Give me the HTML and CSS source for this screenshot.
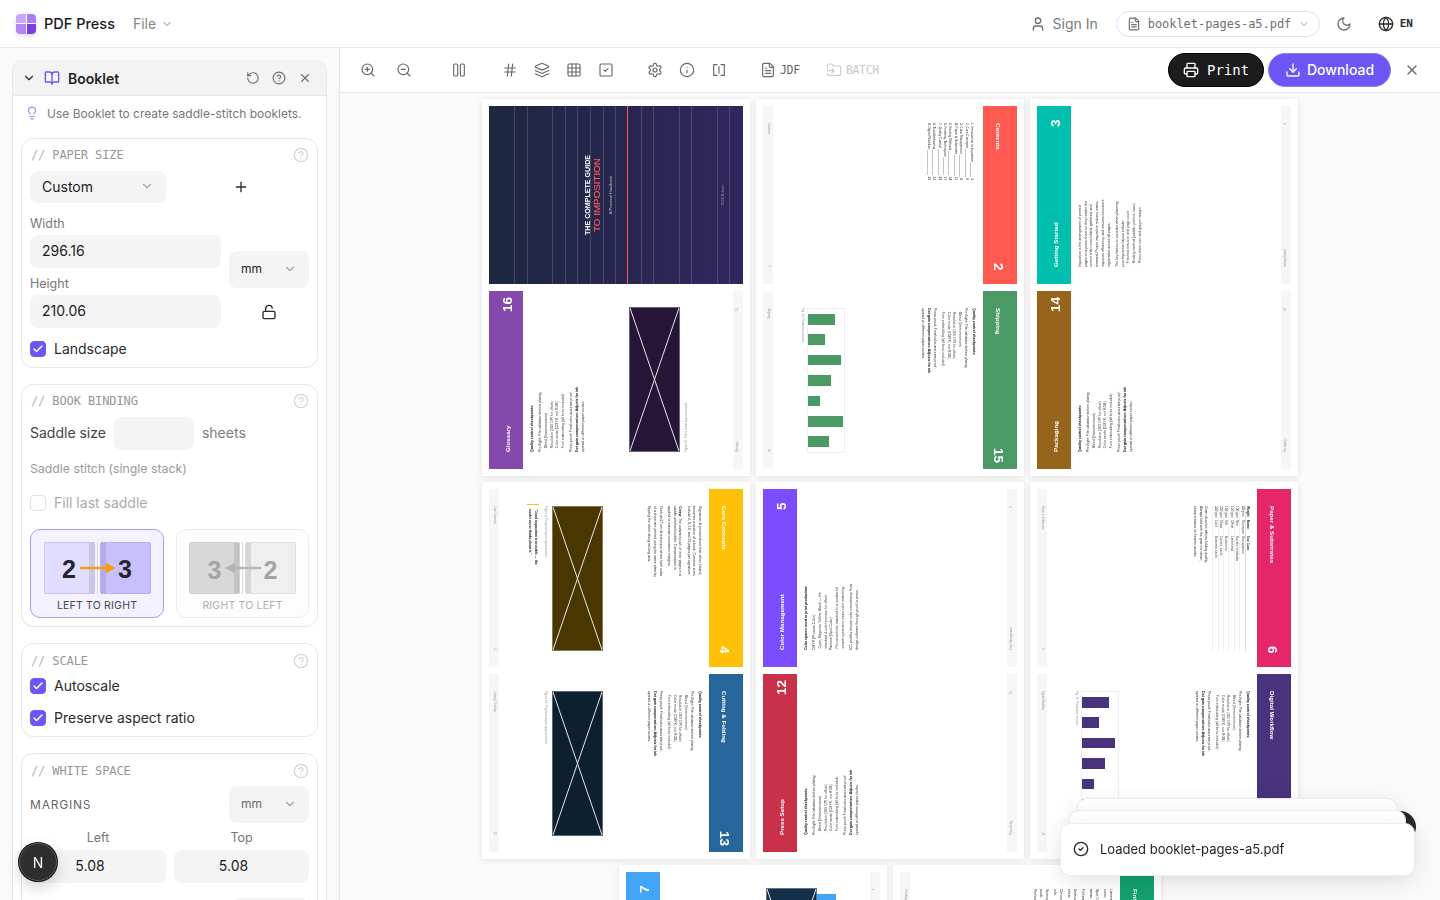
FILE: index.html
```html
<!DOCTYPE html>
<html lang="en">
<head>
    <meta charset="UTF-8">
    <meta name="viewport" content="width=device-width, initial-scale=1.0">
    <title>PDF Press</title>
    <link rel="stylesheet" href="styles.css">
</head>
<body>
    <svg class="sprite" xmlns="http://www.w3.org/2000/svg">
        <symbol id="i-chevron" viewBox="0 0 24 24"><path d="m6 9 6 6 6-6"/></symbol>
        <symbol id="i-user" viewBox="0 0 24 24"><path d="M19 21v-2a4 4 0 0 0-4-4H9a4 4 0 0 0-4 4v2"/><circle cx="12" cy="7" r="4"/></symbol>
        <symbol id="i-file" viewBox="0 0 24 24"><path d="M15 2H6a2 2 0 0 0-2 2v16a2 2 0 0 0 2 2h12a2 2 0 0 0 2-2V7Z"/><path d="M14 2v4a2 2 0 0 0 2 2h4"/><path d="M10 9H8"/><path d="M16 13H8"/><path d="M16 17H8"/></symbol>
        <symbol id="i-moon" viewBox="0 0 24 24"><path d="M12 3a6 6 0 0 0 9 9 9 9 0 1 1-9-9Z"/></symbol>
        <symbol id="i-globe" viewBox="0 0 24 24"><circle cx="12" cy="12" r="10"/><path d="M12 2a14.5 14.5 0 0 0 0 20 14.5 14.5 0 0 0 0-20"/><path d="M2 12h20"/></symbol>
        <symbol id="i-book" viewBox="0 0 24 24"><path d="M12 7v14"/><path d="M3 18a1 1 0 0 1-1-1V4a1 1 0 0 1 1-1h5a4 4 0 0 1 4 4 4 4 0 0 1 4-4h5a1 1 0 0 1 1 1v13a1 1 0 0 1-1 1h-6a3 3 0 0 0-3 3 3 3 0 0 0-3-3z"/></symbol>
        <symbol id="i-reset" viewBox="0 0 24 24"><path d="M3 12a9 9 0 1 0 9-9 9.75 9.75 0 0 0-6.74 2.74L3 8"/><path d="M3 3v5h5"/></symbol>
        <symbol id="i-help" viewBox="0 0 24 24"><circle cx="12" cy="12" r="10"/><path d="M9.09 9a3 3 0 0 1 5.83 1c0 2-3 3-3 3"/><path d="M12 17h.01"/></symbol>
        <symbol id="i-x" viewBox="0 0 24 24"><path d="M18 6 6 18"/><path d="m6 6 12 12"/></symbol>
        <symbol id="i-bulb" viewBox="0 0 24 24"><path d="M15 14c.2-1 .7-1.7 1.5-2.5 1-.9 1.5-2.2 1.5-3.5A6 6 0 0 0 6 8c0 1 .2 2.2 1.5 3.5.7.7 1.3 1.5 1.5 2.5"/><path d="M9 18h6"/><path d="M10 22h4"/></symbol>
        <symbol id="i-plus" viewBox="0 0 24 24"><path d="M5 12h14"/><path d="M12 5v14"/></symbol>
        <symbol id="i-lock" viewBox="0 0 24 24"><rect width="18" height="11" x="3" y="11" rx="2"/><path d="M7 11V7a5 5 0 0 1 9.9-1"/></symbol>
        <symbol id="i-check" viewBox="0 0 24 24"><path d="M20 6 9 17l-5-5"/></symbol>
        <symbol id="i-zoom-in" viewBox="0 0 24 24"><circle cx="11" cy="11" r="8"/><path d="m21 21-4.35-4.35"/><path d="M11 8v6"/><path d="M8 11h6"/></symbol>
        <symbol id="i-zoom-out" viewBox="0 0 24 24"><circle cx="11" cy="11" r="8"/><path d="m21 21-4.35-4.35"/><path d="M8 11h6"/></symbol>
        <symbol id="i-columns" viewBox="0 0 24 24"><rect width="6" height="18" x="4" y="3" rx="2"/><rect width="6" height="18" x="14" y="3" rx="2"/></symbol>
        <symbol id="i-hash" viewBox="0 0 24 24"><path d="M4 9h16"/><path d="M4 15h16"/><path d="M10 3 8 21"/><path d="M16 3l-2 18"/></symbol>
        <symbol id="i-layers" viewBox="0 0 24 24"><path d="m12.83 2.18a2 2 0 0 0-1.66 0L2.6 6.08a1 1 0 0 0 0 1.83l8.58 3.91a2 2 0 0 0 1.66 0l8.58-3.9a1 1 0 0 0 0-1.83Z"/><path d="m22 17.65-9.17 4.16a2 2 0 0 1-1.66 0L2 17.65"/><path d="m22 12.65-9.17 4.16a2 2 0 0 1-1.66 0L2 12.65"/></symbol>
        <symbol id="i-grid" viewBox="0 0 24 24"><rect width="18" height="18" x="3" y="3" rx="2"/><path d="M3 9h18"/><path d="M3 15h18"/><path d="M9 3v18"/><path d="M15 3v18"/></symbol>
        <symbol id="i-square-check" viewBox="0 0 24 24"><rect width="18" height="18" x="3" y="3" rx="2"/><path d="m9 12 2 2 4-4"/></symbol>
        <symbol id="i-gear" viewBox="0 0 24 24"><path d="M12.22 2h-.44a2 2 0 0 0-2 2v.18a2 2 0 0 1-1 1.73l-.43.25a2 2 0 0 1-2 0l-.15-.08a2 2 0 0 0-2.73.73l-.22.38a2 2 0 0 0 .73 2.73l.15.1a2 2 0 0 1 1 1.72v.51a2 2 0 0 1-1 1.74l-.15.09a2 2 0 0 0-.73 2.73l.22.38a2 2 0 0 0 2.73.73l.15-.08a2 2 0 0 1 2 0l.43.25a2 2 0 0 1 1 1.73V20a2 2 0 0 0 2 2h.44a2 2 0 0 0 2-2v-.18a2 2 0 0 1 1-1.73l.43-.25a2 2 0 0 1 2 0l.15.08a2 2 0 0 0 2.73-.73l.22-.39a2 2 0 0 0-.73-2.73l-.15-.08a2 2 0 0 1-1-1.74v-.5a2 2 0 0 1 1-1.74l.15-.09a2 2 0 0 0 .73-2.73l-.22-.38a2 2 0 0 0-2.73-.73l-.15.08a2 2 0 0 1-2 0l-.43-.25a2 2 0 0 1-1-1.73V4a2 2 0 0 0-2-2z"/><circle cx="12" cy="12" r="3"/></symbol>
        <symbol id="i-info" viewBox="0 0 24 24"><circle cx="12" cy="12" r="10"/><path d="M12 16v-4"/><path d="M12 8h.01"/></symbol>
        <symbol id="i-split" viewBox="0 0 24 24"><path d="M9 4H4v16h5"/><path d="M15 4h5v16h-5"/><path d="M12 7v10"/></symbol>
        <symbol id="i-batch" viewBox="0 0 24 24"><path d="M2 9V5a2 2 0 0 1 2-2h3.9a2 2 0 0 1 1.69.9l.81 1.2a2 2 0 0 0 1.67.9H20a2 2 0 0 1 2 2v10a2 2 0 0 1-2 2H4a2 2 0 0 1-2-2v-1"/><path d="M2 13h10"/><path d="m9 16 3-3-3-3"/></symbol>
        <symbol id="i-printer" viewBox="0 0 24 24"><path d="M6 18H4a2 2 0 0 1-2-2v-5a2 2 0 0 1 2-2h16a2 2 0 0 1 2 2v5a2 2 0 0 1-2 2h-2"/><path d="M6 9V3a1 1 0 0 1 1-1h10a1 1 0 0 1 1 1v6"/><rect x="6" y="14" width="12" height="8" rx="1"/></symbol>
        <symbol id="i-download" viewBox="0 0 24 24"><path d="M12 3v12"/><path d="m7 10 5 5 5-5"/><path d="M21 15v4a2 2 0 0 1-2 2H5a2 2 0 0 1-2-2v-4"/></symbol>
        <symbol id="i-circle-check" viewBox="0 0 24 24"><circle cx="12" cy="12" r="10"/><path d="m9 12 2 2 4-4"/></symbol>
        <symbol id="i-cross" viewBox="0 0 145 51" preserveAspectRatio="none"><path d="M0 0 145 51"/><path d="M0 51 145 0"/></symbol>
    </svg>

    <header class="topbar">
        <div class="logo"><i></i><i></i><i></i><i></i></div>
        <span class="brand">PDF Press</span>
        <span class="file-menu">File <svg class="ico ico-12"><use href="#i-chevron"/></svg></span>
        <div class="topbar-right">
            <svg class="ico ico-16 c-grey"><use href="#i-user"/></svg>
            <span class="sign-in">Sign In</span>
            <div class="file-pill">
                <svg class="ico ico-14"><use href="#i-file"/></svg>
                <span>booklet-pages-a5.pdf</span>
                <svg class="ico ico-12 c-light"><use href="#i-chevron"/></svg>
            </div>
            <svg class="ico ico-16 c-grey moon"><use href="#i-moon"/></svg>
            <svg class="ico ico-16 c-dark globe"><use href="#i-globe"/></svg>
            <span class="lang">EN</span>
        </div>
    </header>

    <div class="workspace">
        <aside class="sidebar">
            <section class="panel">
                <div class="panel-head">
                    <svg class="ico ico-14 c-dark"><use href="#i-chevron"/></svg>
                    <svg class="ico ico-16 c-purple"><use href="#i-book"/></svg>
                    <span class="panel-title">Booklet</span>
                    <svg class="ico ico-14 c-grey head-reset"><use href="#i-reset"/></svg>
                    <svg class="ico ico-14 c-grey"><use href="#i-help"/></svg>
                    <svg class="ico ico-14 c-grey"><use href="#i-x"/></svg>
                </div>
                <div class="panel-body">
                    <p class="tip"><svg class="ico ico-14 c-violet"><use href="#i-bulb"/></svg>Use Booklet to create saddle-stitch booklets.</p>

                    <div class="card">
                        <div class="card-title"><span><b>//</b> PAPER SIZE</span><svg class="ico ico-16 c-faint"><use href="#i-help"/></svg></div>
                        <div class="size-top">
                            <div class="select select-custom">Custom<svg class="ico ico-14 c-light"><use href="#i-chevron"/></svg></div>
                            <svg class="ico ico-16 c-dark plus"><use href="#i-plus"/></svg>
                        </div>
                        <div class="size-grid">
                            <div class="size-fields">
                                <label class="field-label">Width</label>
                                <div class="input">296.16</div>
                                <label class="field-label second">Height</label>
                                <div class="input">210.06</div>
                            </div>
                            <div class="size-side">
                                <div class="select select-unit">mm<svg class="ico ico-14 c-light"><use href="#i-chevron"/></svg></div>
                                <div class="lock"><svg class="ico ico-16 c-dark"><use href="#i-lock"/></svg></div>
                            </div>
                        </div>
                        <div class="check-row landscape"><span class="box on"><svg class="ico"><use href="#i-check"/></svg></span>Landscape</div>
                    </div>

                    <div class="card card-binding">
                        <div class="card-title"><span><b>//</b> BOOK BINDING</span><svg class="ico ico-16 c-faint"><use href="#i-help"/></svg></div>
                        <div class="saddle-row">
                            <span>Saddle size</span>
                            <div class="input input-saddle"></div>
                            <span class="muted">sheets</span>
                        </div>
                        <p class="helper">Saddle stitch (single stack)</p>
                        <div class="check-row disabled"><span class="box"></span>Fill last saddle</div>
                        <div class="dir-row">
                            <div class="dir-card active">
                                <div class="dir-pages">
                                    <div class="dir-page strip-right">2</div>
                                    <div class="dir-spine"></div>
                                    <div class="dir-page strip-left dark">3</div>
                                    <svg class="dir-arrow" viewBox="0 0 36 12"><path d="M0 6h26" stroke="#f59e0b" stroke-width="2.4"/><path d="M26 0.5 35.5 6 26 11.5z" fill="#f59e0b"/></svg>
                                </div>
                                <span>LEFT TO RIGHT</span>
                            </div>
                            <div class="dir-card">
                                <div class="dir-pages">
                                    <div class="dir-page strip-right dark">3</div>
                                    <div class="dir-spine"></div>
                                    <div class="dir-page strip-left">2</div>
                                    <svg class="dir-arrow" viewBox="0 0 36 12"><path d="M10 6h26" stroke="#b4b4b4" stroke-width="2.4"/><path d="M10 0.5 0.5 6 10 11.5z" fill="#b4b4b4"/></svg>
                                </div>
                                <span>RIGHT TO LEFT</span>
                            </div>
                        </div>
                    </div>

                    <div class="card">
                        <div class="card-title"><span><b>//</b> SCALE</span><svg class="ico ico-16 c-faint"><use href="#i-help"/></svg></div>
                        <div class="check-row autoscale"><span class="box on"><svg class="ico"><use href="#i-check"/></svg></span>Autoscale</div>
                        <div class="check-row preserve"><span class="box on"><svg class="ico"><use href="#i-check"/></svg></span>Preserve aspect ratio</div>
                    </div>

                    <div class="card">
                        <div class="card-title"><span><b>//</b> WHITE SPACE</span><svg class="ico ico-16 c-faint"><use href="#i-help"/></svg></div>
                        <div class="margins-row">
                            <span>MARGINS</span>
                            <div class="select select-unit">mm<svg class="ico ico-14 c-light"><use href="#i-chevron"/></svg></div>
                        </div>
                        <div class="margin-grid">
                            <div><label>Left</label><div class="input num-input">5.08</div></div>
                            <div><label>Top</label><div class="input num-input">5.08</div></div>
                        </div>
                        <div class="margin-next"></div>
                    </div>
                </div>
            </section>
        </aside>

        <main class="main">
            <div class="toolbar">
                <div class="tool-group tg-zoom">
                    <button class="tool"><svg class="ico ico-16"><use href="#i-zoom-in"/></svg></button>
                    <button class="tool"><svg class="ico ico-16"><use href="#i-zoom-out"/></svg></button>
                </div>
                <div class="tool-group tg-view">
                    <button class="tool"><svg class="ico ico-16"><use href="#i-columns"/></svg></button>
                </div>
                <div class="tool-group tg-marks">
                    <button class="tool"><svg class="ico ico-16"><use href="#i-hash"/></svg></button>
                    <button class="tool"><svg class="ico ico-16"><use href="#i-layers"/></svg></button>
                    <button class="tool"><svg class="ico ico-16"><use href="#i-grid"/></svg></button>
                    <button class="tool"><svg class="ico ico-16"><use href="#i-square-check"/></svg></button>
                </div>
                <div class="tool-group tg-info">
                    <button class="tool"><svg class="ico ico-16"><use href="#i-gear"/></svg></button>
                    <button class="tool"><svg class="ico ico-16"><use href="#i-info"/></svg></button>
                    <button class="tool"><svg class="ico ico-16"><use href="#i-split"/></svg></button>
                </div>
                <div class="tool-text tg-jdf"><svg class="ico ico-16"><use href="#i-file"/></svg>JDF</div>
                <div class="tool-text tg-batch"><svg class="ico ico-16"><use href="#i-batch"/></svg>BATCH</div>
                <div class="toolbar-actions">
                    <button class="btn-print"><svg class="ico ico-16"><use href="#i-printer"/></svg>Print</button>
                    <button class="btn-download"><svg class="ico ico-16"><use href="#i-download"/></svg>Download</button>
                    <svg class="ico ico-16 c-grey close-doc"><use href="#i-x"/></svg>
                </div>
            </div>

            <div class="canvas">
                <div class="sheet-row">
                    <div class="sheet">
                        <div class="page cover">
                            <svg class="cover-lines" viewBox="0 0 254 178" shape-rendering="crispEdges">
                                <path d="M25.5 0v178M38.5 0v178M63.5 0v178M76.5 0v178M88.5 0v178M101.5 0v178M114.5 0v178M126.5 0v178M152.5 0v178M164.5 0v178M190.5 0v178M202.5 0v178M228.5 0v178M240.5 0v178" stroke="#fff" stroke-opacity=".16"/>
                                <path d="M138.5 0v178" stroke="#ff5a52"/>
                            </svg>
                            <div class="page-in up cover-in">
                                <h2>THE COMPLETE GUIDE<em>TO IMPOSITION</em></h2>
                                <p class="cover-sub">A Practical Handbook</p>
                                <p class="cover-ed">2026 Edition</p>
                            </div>
                        </div>
                        <div class="page">
                            <div class="page-in up">
                                <div class="band bg-glossary"><span>Glossary</span><b>16</b></div>
                                <div class="copy">
                                    <p><strong>Quality control checkpoints:</strong></p>
                                    <p class="gap">Pre-flight: File validation before plating</p>
                                    <p class="li">· Bleed (3mm minimum)</p>
                                    <p class="li">· Resolution (300 DPI for offset)</p>
                                    <p class="li">· Color mode (CMYK, not RGB)</p>
                                    <p class="li">· Font embedding (all fonts included)</p>
                                    <p class="gap">Press proof: Final color-accurate proof.</p>
                                    <p><strong>Dot gain compensation: Adjusts for ink</strong> spread on different paper stocks.</p>
                                </div>
                                <div class="fig fig-plum"><svg><use href="#i-cross"/></svg></div>
                                <p class="caption">Figure 16: Press sheet layout example</p>
                                <div class="foot"><span>Glossary</span><span>16</span></div>
                            </div>
                        </div>
                    </div>

                    <div class="sheet">
                        <div class="page">
                            <div class="page-in down">
                                <div class="band bg-contents"><span>Contents</span><b>2</b></div>
                                <div class="toc">
                                    <p><span>1. Introduction to Imposition</span><i></i>3</p>
                                    <p><span>2. Core Concepts</span><i></i>6</p>
                                    <p><span>3. Color Management</span><i></i>8</p>
                                    <p><span>4. Paper &amp; Substrates</span><i></i>11</p>
                                    <p><span>5. Binding Methods</span><i></i>14</p>
                                    <p><span>6. Finishing Techniques</span><i></i>17</p>
                                    <p><span>7. Quality Control</span><i></i>20</p>
                                    <p><span>8. Troubleshooting</span><i></i>23</p>
                                    <p><span>9. Digital Workflow</span><i></i>26</p>
                                </div>
                                <div class="foot"><span>Contents</span><span>2</span></div>
                            </div>
                        </div>
                        <div class="page">
                            <div class="page-in down">
                                <div class="band bg-shipping"><span>Shipping</span><b>15</b></div>
                                <div class="copy copy-chart">
                                    <p><strong>Quality control checkpoints:</strong></p>
                                    <p class="gap">Pre-flight: File validation before plating</p>
                                    <p class="li">· Bleed (3mm minimum)</p>
                                    <p class="li">· Resolution (300 DPI for offset)</p>
                                    <p class="li">· Color mode (CMYK, not RGB)</p>
                                    <p class="li">· Font embedding (all fonts included)</p>
                                    <p class="gap">Press proof: Final color-accurate proof.</p>
                                    <p><strong>Dot gain compensation: Adjusts for ink</strong> spread on different paper stocks.</p>
                                </div>
                                <div class="chart chart-green">
                                    <i style="height:27px"></i><i style="height:17px"></i><i style="height:33px"></i><i style="height:23px"></i><i style="height:12px"></i><i style="height:35px"></i><i style="height:21px"></i>
                                </div>
                                <p class="caption caption-chart">Fig. 15: Production metrics</p>
                                <div class="foot"><span>Shipping</span><span>15</span></div>
                            </div>
                        </div>
                    </div>

                    <div class="sheet">
                        <div class="page">
                            <div class="page-in up">
                                <div class="band bg-started"><span>Getting Started</span><b>3</b></div>
                                <div class="copy">
                                    <p>Imposition is the arrangement of printed pages on a press sheet so they read in the correct order once folded, gathered, and trimmed. Proper imposition reduces waste, improves efficiency, and ensures consistent registration across all pages.</p>
                                    <p class="gap">The key factors to consider when planning your imposition layout include:</p>
                                    <p class="li">· Finished trim size and page count</p>
                                    <p class="li">· Binding method (saddle, perfect, case)</p>
                                    <p class="li">· Press sheet size and gripper margin</p>
                                </div>
                                <div class="foot"><span>Getting Started</span><span>3</span></div>
                            </div>
                        </div>
                        <div class="page">
                            <div class="page-in up">
                                <div class="band bg-packaging"><span>Packaging</span><b>14</b></div>
                                <div class="copy">
                                    <p><strong>Quality control checkpoints:</strong></p>
                                    <p class="gap">Pre-flight: File validation before plating</p>
                                    <p class="li">· Bleed (3mm minimum)</p>
                                    <p class="li">· Resolution (300 DPI for offset)</p>
                                    <p class="li">· Color mode (CMYK, not RGB)</p>
                                    <p class="li">· Font embedding (all fonts included)</p>
                                    <p class="gap">Press proof: Final color-accurate proof.</p>
                                    <p><strong>Dot gain compensation: Adjusts for ink</strong> spread on different paper stocks.</p>
                                </div>
                                <div class="foot"><span>Packaging</span><span>14</span></div>
                            </div>
                        </div>
                    </div>
                </div>

                <div class="sheet-row">
                    <div class="sheet">
                        <div class="page">
                            <div class="page-in down">
                                <div class="band bg-core"><span>Core Concepts</span><b>4</b></div>
                                <div class="copy">
                                    <p>Signature: A printed sheet that, when folded, becomes a section of a book. Common sizes include 4, 8, 16, and 32 pages per signature.</p>
                                    <p class="gap"><strong>Creep:</strong> The outward push of inner pages in a saddle-stitched booklet. Compensation is applied to maintain consistent margins.</p>
                                    <p class="gap">Work and Turn: A technique where both sides of a sheet are printed using the same plate by flipping the sheet along its long axis.</p>
                                </div>
                                <div class="fig fig-olive"><svg><use href="#i-cross"/></svg></div>
                                <p class="caption">Figure 4: Prepress layout approximation</p>
                                <blockquote class="pull">"Good imposition is invisible — the reader never thinks about it."</blockquote>
                                <div class="foot"><span>Core Concepts</span><span>4</span></div>
                            </div>
                        </div>
                        <div class="page">
                            <div class="page-in down">
                                <div class="band bg-cutting"><span>Cutting &amp; Folding</span><b>13</b></div>
                                <div class="copy">
                                    <p><strong>Quality control checkpoints:</strong></p>
                                    <p class="gap">Pre-flight: File validation before plating</p>
                                    <p class="li">· Bleed (3mm minimum)</p>
                                    <p class="li">· Resolution (300 DPI for offset)</p>
                                    <p class="li">· Color mode (CMYK, not RGB)</p>
                                    <p class="li">· Font embedding (all fonts included)</p>
                                    <p class="gap">Press proof: Final color-accurate proof.</p>
                                    <p><strong>Dot gain compensation: Adjusts for ink</strong> spread on different paper stocks.</p>
                                </div>
                                <div class="fig fig-navy"><svg><use href="#i-cross"/></svg></div>
                                <p class="caption">Figure 13: Prepress layout approximation</p>
                                <div class="foot"><span>Cutting &amp; Folding</span><span>13</span></div>
                            </div>
                        </div>
                    </div>

                    <div class="sheet">
                        <div class="page">
                            <div class="page-in up">
                                <div class="band bg-color"><span>Color Management</span><b>5</b></div>
                                <div class="copy">
                                    <p><strong>Color spaces used in print production:</strong></p>
                                    <p class="gap">CMYK (Process Color)</p>
                                    <p class="li">Cyan, Magenta, Yellow, Black — the standard 4-color process for offset.</p>
                                    <p>Pantone (Spot Color)</p>
                                    <p class="li">Pre-mixed inks matched to a numbered swatch system for exact color matching.</p>
                                    <p class="gap">ICC profiles ensure color consistency from design software through proof to press.</p>
                                </div>
                                <div class="foot"><span>Color Management</span><span>5</span></div>
                            </div>
                        </div>
                        <div class="page">
                            <div class="page-in up">
                                <div class="band bg-press"><span>Press Setup</span><b>12</b></div>
                                <div class="copy">
                                    <p><strong>Quality control checkpoints:</strong></p>
                                    <p class="gap">Pre-flight: File validation before plating</p>
                                    <p class="li">· Bleed (3mm minimum)</p>
                                    <p class="li">· Resolution (300 DPI for offset)</p>
                                    <p class="li">· Color mode (CMYK, not RGB)</p>
                                    <p class="li">· Font embedding (all fonts included)</p>
                                    <p class="gap">Press proof: Final color-accurate proof.</p>
                                    <p><strong>Dot gain compensation: Adjusts for ink</strong> spread on different paper stocks.</p>
                                </div>
                                <div class="foot"><span>Press Setup</span><span>12</span></div>
                            </div>
                        </div>
                    </div>

                    <div class="sheet">
                        <div class="page">
                            <div class="page-in down">
                                <div class="band bg-paper"><span>Paper &amp; Substrates</span><b>6</b></div>
                                <div class="paper-table">
                                    <p class="head"><span>Weight</span><span>Name</span><span>Use Case</span></p>
                                    <p><span>80 gsm</span><span>Newsprint</span><span>Newspapers</span></p>
                                    <p><span>100 gsm</span><span>Text</span><span>Novels, textbooks</span></p>
                                    <p><span>120 gsm</span><span>Offset</span><span>Letterhead</span></p>
                                    <p><span>150 gsm</span><span>Silk</span><span>Brochures</span></p>
                                    <p><span>250 gsm</span><span>Gloss</span><span>Covers, cards</span></p>
                                    <p><span>350 gsm</span><span>Card</span><span>Business cards</span></p>
                                </div>
                                <div class="copy paper-note">
                                    <p>Grain direction affects folding quality. Always fold with the grain for clean, sharp creases on heavier stocks.</p>
                                </div>
                                <div class="foot"><span>Paper &amp; Substrates</span><span>6</span></div>
                            </div>
                        </div>
                        <div class="page">
                            <div class="page-in down">
                                <div class="band bg-digital"><span>Digital Workflow</span><b>11</b></div>
                                <div class="copy copy-chart">
                                    <p><strong>Quality control checkpoints:</strong></p>
                                    <p class="gap">Pre-flight: File validation before plating</p>
                                    <p class="li">· Bleed (3mm minimum)</p>
                                    <p class="li">· Resolution (300 DPI for offset)</p>
                                    <p class="li">· Color mode (CMYK, not RGB)</p>
                                    <p class="li">· Font embedding (all fonts included)</p>
                                    <p class="gap">Press proof: Final color-accurate proof.</p>
                                    <p><strong>Dot gain compensation: Adjusts for ink</strong> spread on different paper stocks.</p>
                                </div>
                                <div class="chart chart-purple">
                                    <i style="height:27px"></i><i style="height:17px"></i><i style="height:33px"></i><i style="height:23px"></i><i style="height:12px"></i><i style="height:35px"></i><i style="height:21px"></i>
                                </div>
                                <p class="caption caption-chart">Fig. 11: Production metrics</p>
                                <div class="foot"><span>Digital Workflow</span><span>11</span></div>
                            </div>
                        </div>
                    </div>
                </div>

                <div class="sheet-row">
                    <div class="sheet">
                        <div class="page">
                            <div class="page-in up">
                                <div class="band bg-binding"><span>Binding Methods</span><b>7</b></div>
                                <div class="copy">
                                    <p><strong>Common binding methods for print:</strong></p>
                                </div>
                                <div class="fig fig-deep"><svg><use href="#i-cross"/></svg></div>
                                <div class="fig-strip"></div>
                                <div class="foot"><span>Binding Methods</span><span>7</span></div>
                            </div>
                        </div>
                    </div>
                    <div class="sheet">
                        <div class="page">
                            <div class="page-in down">
                                <div class="band bg-finishing"><span>Finishing Techniques</span><b>8</b></div>
                                <div class="copy">
                                    <p>Lamination: Gloss or matte film protects the cover.</p>
                                    <p class="gap">Spot UV: Raised clear coating on selected areas.</p>
                                    <p class="gap">Foil stamping: Metallic foil applied with heat.</p>
                                    <p class="gap">Embossing: Raised design pressed into the sheet.</p>
                                    <p class="gap">Die cutting: Custom shapes cut with a steel rule.</p>
                                    <p class="gap">Scoring: A crease added before folding heavy stock.</p>
                                    <p>Perforating: Tear lines for coupons and forms.</p>
                                </div>
                                <div class="foot"><span>Finishing Techniques</span><span>8</span></div>
                            </div>
                        </div>
                    </div>
                </div>
            </div>
        </main>
    </div>

    <div class="dev-badge">N</div>

    <div class="toast-stack">
        <div class="toast-dot"></div>
        <div class="toast toast-back2"></div>
        <div class="toast toast-back1"></div>
        <div class="toast toast-front"><svg class="ico ico-16 c-dark"><use href="#i-circle-check"/></svg>Loaded booklet-pages-a5.pdf</div>
    </div>
</body>
</html>
```

FILE: styles.css
```css
:root {
    --purple: #6c56f5;
    --line: #e7e7e7;
    --field: #f4f4f4;
    --font-ui: 'Inter', 'Liberation Sans', sans-serif;
    --font-mono: 'DejaVu Sans Mono', 'Liberation Mono', monospace;
    --font-print: 'Liberation Sans', Arial, sans-serif;
}

* { box-sizing: border-box; }

html, body {
    height: 100%;
}

body {
    margin: 0;
    overflow: hidden;
    background: #fafafa;
    color: #1b1b1f;
    font-family: var(--font-ui);
    font-size: 14px;
}

p, h2, blockquote { margin: 0; }

.sprite { display: none; }

.ico {
    display: block;
    flex: none;
    fill: none;
    stroke: currentColor;
    stroke-width: 2;
    stroke-linecap: round;
    stroke-linejoin: round;
}
.ico-12 { width: 12px; height: 12px; }
.ico-14 { width: 14px; height: 14px; }
.ico-16 { width: 16px; height: 16px; }
.c-grey { color: #6f6f6f; }
.c-light { color: #a3a3a3; }
.c-faint { color: #d6d6d6; }
.c-dark { color: #2a2a2a; }
.c-purple { color: var(--purple); }
.c-violet { color: #a78bfa; }

/* top bar */
.topbar {
    height: 48px;
    display: flex;
    align-items: center;
    padding: 0 27px 0 16px;
    background: #fff;
    border-bottom: 1px solid var(--line);
}

.logo {
    width: 20px;
    height: 20px;
    display: grid;
    grid-template-columns: 1fr 1fr;
    gap: 1px;
    border-radius: 4px;
    overflow: hidden;
    box-shadow: 0 2px 5px #7c3aed33;
}
.logo i:nth-child(1) { background: #cda4fb; }
.logo i:nth-child(2) { background: #a67ff6; }
.logo i:nth-child(3) { background: #b285f4; }
.logo i:nth-child(4) { background: #7a3de6; }

.brand {
    margin-left: 8px;
    font-size: 14.5px;
    font-weight: 500;
}

.file-menu {
    margin-left: 18px;
    display: flex;
    align-items: center;
    gap: 5px;
    color: #858585;
}

.topbar-right {
    margin-left: auto;
    display: flex;
    align-items: center;
}

.sign-in {
    margin-left: 7px;
    color: #787878;
}

.file-pill {
    width: 204px;
    height: 26px;
    margin-left: 18px;
    padding: 0 10px;
    display: flex;
    align-items: center;
    gap: 7px;
    border: 1.5px solid #e1ddfb;
    border-radius: 13px;
    color: #6f6f6f;
    font-family: var(--font-mono);
    font-size: 12px;
    white-space: nowrap;
}
.file-pill span { letter-spacing: -0.05px; }

.moon { margin-left: 16px; }
.globe { margin-left: 26px; }

.lang {
    margin-left: 6px;
    font-family: var(--font-mono);
    font-size: 11px;
    font-weight: 700;
    color: #2a2a2a;
}

/* layout */
.workspace {
    display: flex;
    height: 852px;
}

.sidebar {
    width: 340px;
    flex: none;
    padding: 12px 12px 0;
    border-right: 1px solid var(--line);
    overflow: hidden;
}

.main {
    flex: 1;
    min-width: 0;
    display: flex;
    flex-direction: column;
}

/* sidebar */
.panel {
    width: 315px;
    background: #fff;
    border: 1px solid var(--line);
    border-bottom: 0;
    border-radius: 10px 10px 0 0;
}

.panel-head {
    height: 36px;
    margin-top: -1px;
    padding: 1px 14px 0 9px;
    display: flex;
    align-items: center;
    gap: 8px;
    background: #f3f3f3;
    border-bottom: 1px solid var(--line);
    border-radius: 10px 10px 0 0;
}
.panel-head .ico:nth-child(5),
.panel-head .ico:nth-child(6) { margin-left: 4px; }

.panel-title {
    font-weight: 600;
    font-size: 14px;
    color: #232323;
}

.head-reset { margin-left: auto; }

.panel-body { padding: 0 8px; }

.tip {
    height: 42px;
    padding: 0 0 8px 4px;
    display: flex;
    align-items: center;
    gap: 8px;
    color: #777;
    font-size: 12px;
}

.card {
    margin-bottom: 16px;
    padding: 8px 8px 10px;
    background: #fff;
    border: 1px solid var(--line);
    border-radius: 12px;
}
.card:nth-of-type(n+3) { padding-top: 9px; }
.card-binding { padding-bottom: 8px; }

.card-title {
    height: 16px;
    display: flex;
    align-items: center;
    justify-content: space-between;
    padding-left: 1px;
    font-family: var(--font-mono);
    font-size: 12px;
    letter-spacing: -0.1px;
    color: #969696;
}
.card-title b {
    font-weight: 400;
    color: #b5b5b5;
}

.select, .input {
    background: var(--field);
    border-radius: 8px;
    display: flex;
    align-items: center;
}

.select {
    justify-content: space-between;
    padding: 0 12px;
}
.select-custom {
    width: 136px;
    height: 32px;
    padding-bottom: 2px;
}
.select-unit {
    width: 80px;
    height: 37px;
    padding-bottom: 2px;
    font-size: 12px;
}

.input {
    height: 33px;
    padding: 0 12px 2px;
}

.size-top {
    margin-top: 8px;
    display: flex;
    align-items: center;
}
.plus {
    margin-left: 67px;
}

.size-grid {
    margin-top: 12px;
    display: grid;
    grid-template-columns: 191px 80px;
    column-gap: 8px;
}

.field-label {
    display: block;
    height: 16px;
    margin-bottom: 4px;
    padding-top: 1px;
    font-size: 12.5px;
    line-height: 16px;
    color: #777;
}
.field-label.second { margin-top: 7px; }

.size-side { padding-top: 36px; }

.lock {
    height: 33px;
    margin-top: 7px;
    display: flex;
    align-items: center;
    justify-content: center;
}

.check-row {
    height: 16px;
    padding-bottom: 2px;
    display: flex;
    align-items: center;
    gap: 8px;
    font-size: 14px;
    color: #2a2a2a;
}

.box {
    width: 16px;
    height: 16px;
    flex: none;
    margin-bottom: -2px;
    display: flex;
    align-items: center;
    justify-content: center;
    background: #fff;
    border: 1px solid #e0e0e0;
    border-radius: 4px;
}
.box.on {
    background: var(--purple);
    border-color: var(--purple);
    color: #fff;
}
.box .ico {
    width: 12px;
    height: 12px;
    stroke-width: 3;
}

.landscape { margin-top: 13px; }
.autoscale { margin-top: 9px; }
.preserve { margin-top: 16px; }

.disabled {
    margin-top: 18px;
    color: #ababab;
}

.saddle-row {
    margin-top: 8px;
    display: flex;
    align-items: center;
    gap: 8px;
    color: #444;
}
.saddle-row > span { padding-bottom: 2px; }
.input-saddle { width: 80px; }
.muted { color: #7c7c7c; }

.helper {
    margin-top: 11px;
    font-size: 12.3px;
    line-height: 16px;
    color: #999;
}

.dir-row {
    margin-top: 18px;
    display: grid;
    grid-template-columns: 134px 133px;
    column-gap: 12px;
}

.dir-card {
    height: 89px;
    padding-top: 12px;
    display: flex;
    flex-direction: column;
    align-items: center;
    border: 1px solid #ececec;
    border-radius: 10px;
    background: #fdfdfd;
    color: #b0b0b0;
    font-size: 10.5px;
    letter-spacing: 0.2px;
}
.dir-card > span { margin-top: 5px; line-height: 13px; }

.dir-card.active {
    border: 1.5px solid #a99bf7;
    padding-top: 11.5px;
    background: #f4f2ff;
    color: #444;
}

.dir-pages {
    position: relative;
    display: flex;
    height: 52px;
}

.dir-page {
    position: relative;
    width: 51px;
    padding-top: 4px;
    display: flex;
    align-items: center;
    justify-content: center;
    background: #efefef;
    border: 1px solid #dedede;
    border-radius: 2px;
    font-family: var(--font-print);
    font-weight: 700;
    font-size: 25px;
    color: #a4a4a4;
}
.dir-page.dark {
    background: #d8d8d8;
    border-color: #cfcfcf;
}
.active .dir-page {
    background: #e1ddfe;
    border-color: #c9c3f7;
    color: #25252b;
}
.active .dir-page.dark {
    background: #c8c0fd;
    border-color: #b9b0f7;
}
.dir-page::after {
    content: "";
    position: absolute;
    top: 0;
    bottom: 0;
    width: 5px;
    background: #0000001a;
}
.strip-right::after { right: 0; }
.strip-left::after { left: 0; }

.dir-spine {
    width: 5px;
    background: linear-gradient(90deg, transparent 2px, #dcdcdc 2px, #dcdcdc 3px, transparent 3px);
}

.dir-arrow {
    position: absolute;
    left: 36px;
    top: 20px;
    width: 36px;
    height: 12px;
}

.margins-row {
    margin-top: 7px;
    display: flex;
    align-items: center;
    justify-content: space-between;
    font-size: 12px;
    letter-spacing: 0.8px;
    color: #666;
}
.margins-row .select { letter-spacing: 0; }

.margin-grid {
    margin-top: 7px;
    display: grid;
    grid-template-columns: 136px 135px;
    column-gap: 8px;
}
.margin-grid label {
    display: block;
    height: 16px;
    margin-bottom: 4px;
    text-align: center;
    font-size: 12.5px;
    line-height: 16px;
    color: #777;
}
.num-input {
    justify-content: center;
    padding: 0 16px 2px 0;
}

.margin-next {
    width: 77px;
    height: 33px;
    margin: 15px 0 0 auto;
    background: var(--field);
    border-radius: 8px;
}

/* toolbar */
.toolbar {
    height: 45px;
    flex: none;
    padding: 0 20px 0 12px;
    display: flex;
    align-items: center;
    background: #fff;
    border-bottom: 1px solid var(--line);
    color: #666;
}

.tool-group { display: flex; }
.tg-zoom { gap: 4px; }
.tg-view { margin-left: 23px; }
.tg-marks { margin-left: 19px; }
.tg-info { margin-left: 17px; }
.tg-jdf { margin-left: 25px; }
.tg-batch { margin-left: 26px; color: #c9c9c9; }

.tool {
    width: 32px;
    height: 32px;
    padding: 0;
    display: flex;
    align-items: center;
    justify-content: center;
    background: none;
    border: 0;
    color: inherit;
}
.tool .ico { stroke-width: 1.7; }

.tool-text {
    display: flex;
    align-items: center;
    gap: 4px;
    font-family: var(--font-mono);
    font-size: 11.5px;
    letter-spacing: -0.3px;
}
.tool-text .ico { stroke-width: 1.7; }

.toolbar-actions {
    margin-left: auto;
    display: flex;
    align-items: center;
}

.btn-print, .btn-download {
    height: 34px;
    display: flex;
    align-items: center;
    border-radius: 17px;
    font-size: 14px;
    color: #fff;
}

.btn-print {
    width: 96px;
    padding: 0 0 0 14px;
    gap: 8px;
    background: #1c1c1f;
    border: 1px solid #000;
    font-family: var(--font-mono);
}

.btn-download {
    width: 123px;
    margin-left: 4px;
    padding: 0 0 2px 16px;
    gap: 6px;
    background: var(--purple);
    border: 1px solid #8d7cf8;
    font-family: var(--font-ui);
    font-weight: 500;
}
.btn-download .ico { margin-top: 2px; }

.close-doc { margin-left: 13px; }

/* imposed sheets */
.canvas {
    flex: 1;
    padding-top: 6px;
    overflow: hidden;
    display: flex;
    flex-direction: column;
    gap: 6px;
}

.sheet-row {
    display: flex;
    justify-content: center;
    gap: 6px;
    flex: none;
}

.sheet {
    width: 268px;
    padding: 7px;
    display: flex;
    flex-direction: column;
    gap: 7px;
    background: #fff;
    box-shadow: 0 1px 6px #0000001a;
}

.page {
    position: relative;
    height: 178px;
    display: flex;
    align-items: center;
    justify-content: center;
    overflow: hidden;
    filter: blur(0.25px);
}

.page-in {
    width: 178px;
    height: 254px;
    flex: none;
    display: flex;
    flex-direction: column;
    font-family: var(--font-print);
    font-size: 3.5px;
    line-height: 5.7px;
    color: #2a2a2a;
}
.page-in.up { transform: rotate(-90deg); }
.page-in.down { transform: rotate(90deg); }

.band {
    height: 34px;
    flex: none;
    padding: 4px 0 0 17px;
    display: flex;
    align-items: center;
    justify-content: space-between;
    color: #fff;
    font-size: 6.2px;
    line-height: 8px;
    font-weight: 700;
}
.band b {
    width: 21px;
    font-size: 13.5px;
    line-height: 14px;
}

.bg-glossary { background: #8449ad; }
.bg-contents { background: #ff5a52; }
.bg-shipping { background: #4b9a65; }
.bg-started { background: #00bfae; }
.bg-packaging { background: #96651b; }
.bg-core { background: #ffc107; }
.bg-cutting { background: #26669b; }
.bg-color { background: #7c4dff; }
.bg-press { background: #c9314a; }
.bg-paper { background: #e5266b; }
.bg-digital { background: #4a337d; }
.bg-binding { background: #42a5f5; }
.bg-finishing { background: #14a06f; }

.copy {
    width: 72px;
    height: 99px;
    flex: none;
    margin: 7px 0 0 17px;
}
.copy strong { color: #111; }
.copy-chart { height: 131px; }
.gap { margin-top: 2.6px; }
.li { padding-left: 1.6px; color: #3c3c3c; }

.fig {
    width: 145px;
    height: 51px;
    flex: none;
    margin-left: 17px;
    border: 0.5px solid #ffffff55;
    overflow: hidden;
}
.fig svg {
    display: block;
    width: 100%;
    height: 100%;
    fill: none;
    stroke: #efe9ef;
    stroke-width: 1;
}
.fig-plum { background: #261536; }
.fig-olive { background: #4a3700; }
.fig-navy { background: #0d2030; }
.fig-deep { background: #14304a; }

.fig-strip {
    width: 145px;
    height: 19px;
    margin-left: 17px;
    background: #42a5f5;
    border-right: 6px solid #fff;
}

.caption {
    margin: 4px 0 0 17px;
    font-size: 2.9px;
    line-height: 4px;
    color: #999;
}

.pull {
    width: 70px;
    margin: 5px 0 0 15px;
    padding-left: 4px;
    border-left: 1px solid #ffc107;
    font-size: 3.3px;
    line-height: 6px;
    font-weight: 700;
    color: #222;
}

.foot {
    height: 10px;
    flex: none;
    margin-top: auto;
    padding: 0 17px;
    display: flex;
    align-items: center;
    justify-content: space-between;
    background: #f6f6f9;
    font-size: 2.7px;
    line-height: 4px;
    color: #999;
}

.toc {
    width: 57px;
    margin: 9px 0 0 17px;
    font-size: 3.2px;
    line-height: 5.4px;
}
.toc p { display: flex; }
.toc span { white-space: nowrap; }
.toc i {
    flex: 1;
    margin: 0 1px 1.4px;
    border-bottom: 0.3px solid #c4c4c4;
}

.chart {
    width: 145px;
    height: 38px;
    flex: none;
    margin-left: 17px;
    padding: 0 5px;
    display: flex;
    align-items: flex-end;
    justify-content: space-between;
    border: 0.5px solid #eeeef4;
}
.chart i {
    width: 10.6px;
    display: block;
}
.chart-green i { background: #4b9a65; }
.chart-purple i { background: #4a337d; }
.caption-chart { margin-top: 2px; }

.paper-table {
    width: 145px;
    margin: 7px 0 0 17px;
    font-size: 3.2px;
    line-height: 5.2px;
}
.paper-table p {
    display: grid;
    grid-template-columns: 14px 16px 1fr;
    height: 5.4px;
    border-bottom: 0.25px solid #efefef;
    color: #444;
}
.paper-table .head {
    font-weight: 700;
    color: #222;
    border-bottom-color: #dcdcdc;
}
.paper-note {
    height: auto;
    margin-top: 4px;
    width: 62px;
}

/* cover */
.cover {
    background: linear-gradient(90deg, #1c2740 0%, #32265f 100%);
}

.cover-lines {
    position: absolute;
    inset: 0;
    width: 100%;
    height: 100%;
}

.cover-in {
    position: relative;
    align-items: center;
    padding: 95px 0 18px;
    color: #fff;
    text-align: center;
}
.cover-in h2 {
    font-size: 7.1px;
    line-height: 8.6px;
    font-weight: 700;
}
.cover-in em {
    display: block;
    font-style: normal;
    font-weight: 400;
    font-size: 9.8px;
    -webkit-text-stroke: 0.15px #ff5a52;
    color: #ff5a52;
}
.cover-sub {
    margin-top: 7px;
    font-size: 4px;
    line-height: 5px;
    color: #ffffffa8;
}
.cover-ed {
    margin-top: auto;
    font-size: 3.8px;
    line-height: 4px;
    color: #ffffff70;
}

/* floating bits */
.dev-badge {
    position: fixed;
    left: 19px;
    top: 843px;
    width: 38px;
    height: 38px;
    display: flex;
    align-items: center;
    justify-content: center;
    background: #2e2e2e;
    border: 1px solid #5a5a5a;
    border-radius: 50%;
    box-shadow: 0 0 0 1px #111, 0 6px 16px #00000030;
    color: #fff;
    font-size: 14px;
    font-weight: 400;
}

.toast-stack {
    position: fixed;
    right: 25px;
    bottom: 24px;
    width: 355px;
    height: 53px;
}

.toast {
    position: absolute;
    height: 53px;
    background: #fff;
    border: 1px solid #ececec;
    border-radius: 10px;
    box-shadow: 0 6px 24px #00000018;
}
.toast-back2 { left: 17px; right: 18px; top: -25px; }
.toast-back1 { left: 9px; right: 9px; top: -13px; }
.toast-front {
    inset: 0;
    height: auto;
    padding: 0 0 1px 12px;
    display: flex;
    align-items: center;
    gap: 11px;
    font-size: 13px;
    color: #1f1f1f;
}

.toast-dot {
    position: absolute;
    right: -1px;
    top: -12px;
    width: 32px;
    height: 32px;
    background: #2a2a2a;
    border-radius: 50%;
}
```
